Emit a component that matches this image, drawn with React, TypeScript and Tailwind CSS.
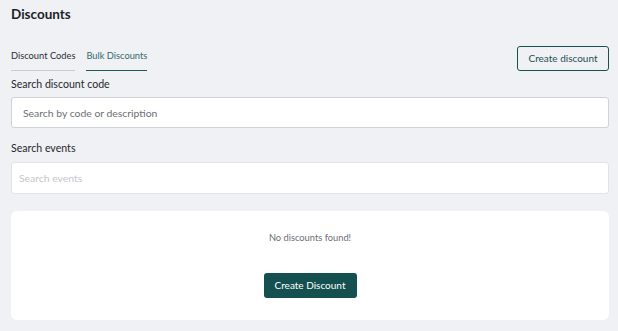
export default function App() {
  return (
    <div
      className="min-h-screen bg-[#f0f1f5] pl-[11px] pr-[9px] text-[#1f2328]"
      style={{ fontFamily: "Lato, 'Open Sans', sans-serif" }}
    >
      <div className="h-[30px] flex items-center">
        <h1 className="text-[13.5px] font-bold leading-none text-[#1c1f26]">Discounts</h1>
      </div>

      <div className="mt-[16px] h-[25px] flex items-end justify-between">
        <div className="flex items-end gap-[11px] h-full">
          <button className="pb-[8px] border-b-[1.5px] border-[#c9ccd3] text-[9.3px] leading-[12px] text-[#2a2d33]">
            Discount Codes
          </button>
          <button className="pb-[8px] border-b-[1.5px] border-[#1c5a5c] text-[9.3px] leading-[12px] text-[#2f6a6c]">
            Bulk Discounts
          </button>
        </div>
        <button className="h-[25px] w-[92px] rounded-[3px] border border-[#18504f] bg-transparent text-[10px] text-[#1f4e50]">
          Create discount
        </button>
      </div>

      <label className="block mt-[6px] h-[14px] text-[10.6px] leading-[14px] text-[#25282d]">
        Search discount code
      </label>
      <input
        className="mt-[6px] block w-full h-[31px] rounded-[3px] border border-[#cfd2d9] bg-white px-[11px] text-[10.4px] placeholder:text-[#6b6e75] outline-none"
        placeholder="Search by code or description"
      />

      <label className="block mt-[13px] h-[14px] text-[10.6px] leading-[14px] text-[#25282d]">
        Search events
      </label>
      <input
        className="mt-[7px] block w-full h-[32px] rounded-[3px] border border-[#e1e3e8] bg-white px-[7px] text-[10.4px] placeholder:text-[#c3c6cc] outline-none"
        placeholder="Search events"
      />

      <div className="mt-[17px] h-[109px] rounded-[6px] bg-white flex flex-col items-center pt-[21px]">
        <p className="text-[9.3px] leading-[12px] text-[#6b6e75]">No discounts found!</p>
        <button className="mt-[29px] h-[25px] w-[93px] rounded-[3px] bg-[#13504f] text-[10px] text-white">
          Create Discount
        </button>
      </div>
    </div>
  )
}
